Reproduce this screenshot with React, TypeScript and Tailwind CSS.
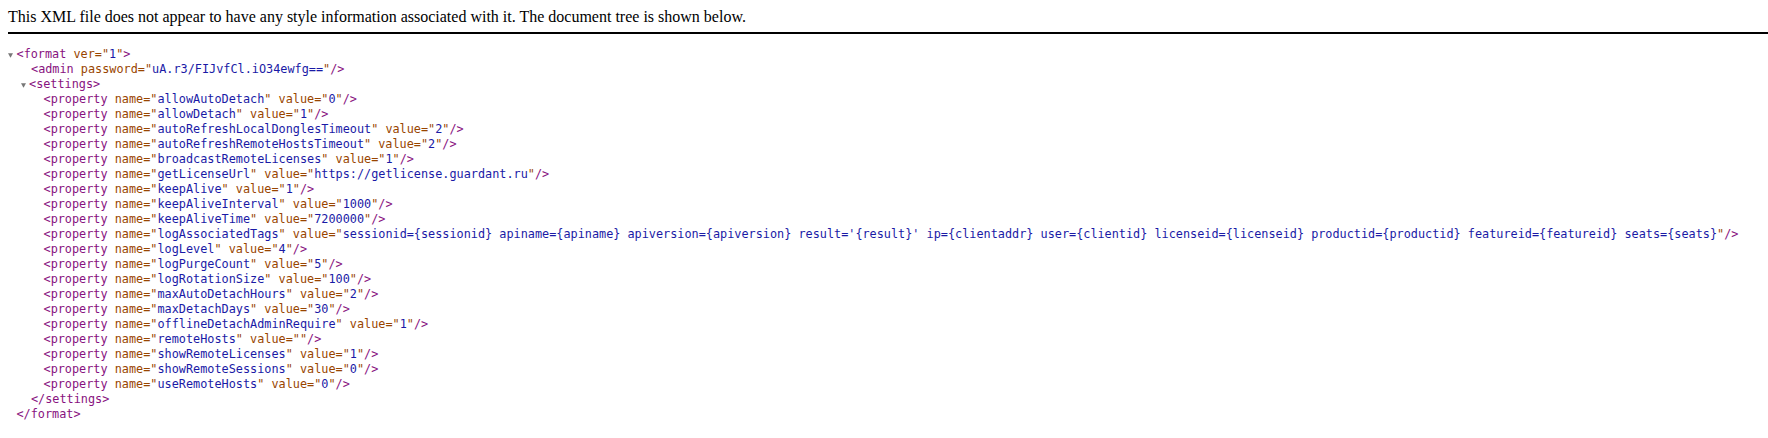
import React from "react"

type Attr = [string, string]

interface Line {
  level: 0 | 1 | 2
  kind: "open" | "self" | "close"
  tag: string
  attrs?: Attr[]
  folder?: boolean
}

const props: Attr[] = [
  ["allowAutoDetach", "0"],
  ["allowDetach", "1"],
  ["autoRefreshLocalDonglesTimeout", "2"],
  ["autoRefreshRemoteHostsTimeout", "2"],
  ["broadcastRemoteLicenses", "1"],
  ["getLicenseUrl", "https://getlicense.guardant.ru"],
  ["keepAlive", "1"],
  ["keepAliveInterval", "1000"],
  ["keepAliveTime", "7200000"],
  [
    "logAssociatedTags",
    "sessionid={sessionid} apiname={apiname} apiversion={apiversion} result='{result}' ip={clientaddr} user={clientid} licenseid={licenseid} productid={productid} featureid={featureid} seats={seats}",
  ],
  ["logLevel", "4"],
  ["logPurgeCount", "5"],
  ["logRotationSize", "100"],
  ["maxAutoDetachHours", "2"],
  ["maxDetachDays", "30"],
  ["offlineDetachAdminRequire", "1"],
  ["remoteHosts", ""],
  ["showRemoteLicenses", "1"],
  ["showRemoteSessions", "0"],
  ["useRemoteHosts", "0"],
]

const lines: Line[] = [
  { level: 0, kind: "open", tag: "format", attrs: [["ver", "1"]], folder: true },
  { level: 1, kind: "self", tag: "admin", attrs: [["password", "uA.r3/FIJvfCl.iO34ewfg=="]] },
  { level: 1, kind: "open", tag: "settings", folder: true },
  ...props.map(
    ([name, value]): Line => ({
      level: 2,
      kind: "self",
      tag: "property",
      attrs: [
        ["name", name],
        ["value", value],
      ],
    })
  ),
  { level: 1, kind: "close", tag: "settings" },
  { level: 0, kind: "close", tag: "format" },
]

// left padding per depth, folder lines leave room for the triangle
const indent = ["pl-[16.5px]", "pl-[31px]", "pl-[43.5px]"]
const folderIndent = ["pl-[8px]", "pl-[20.5px]", "pl-[33px]"]

const Triangle = () => (
  <span className="inline-block w-[8.5px] align-[0.5px]">
    <svg width="5" height="5" viewBox="0 0 5 5" className="block">
      <polygon points="0,0.2 5,0.2 2.5,4.8" fill="#777777" />
    </svg>
  </span>
)

const TagLine = ({ line }: { line: Line }) => {
  const pad = line.folder ? folderIndent[line.level] : indent[line.level]
  return (
    <div className={`h-[15px] whitespace-pre ${pad}`}>
      {line.folder && <Triangle />}
      <span className="text-[#881280]">
        {line.kind === "close" ? "</" : "<"}
        {line.tag}
      </span>
      {line.attrs?.map(([n, v]) => (
        <React.Fragment key={n}>
          {" "}
          <span className="text-[#994500]">
            {n}="<span className="text-[#1a1aa6]">{v}</span>"
          </span>
        </React.Fragment>
      ))}
      <span className="text-[#881280]">{line.kind === "self" ? "/>" : ">"}</span>
    </div>
  )
}

export default function App() {
  return (
    <div className="min-h-screen bg-white text-black">
      <div className="ml-2 mt-2 border-b-2 border-black pb-[6px] font-['Liberation_Serif',serif] text-[16px] leading-[18px]">
        This XML file does not appear to have any style information associated with it. The document tree is shown
        below.
      </div>
      <div className="mt-[13px] font-['DejaVu_Sans_Mono',monospace] text-[11.83px] leading-[15px]">
        {lines.map((l, i) => (
          <TagLine key={i} line={l} />
        ))}
      </div>
    </div>
  )
}
